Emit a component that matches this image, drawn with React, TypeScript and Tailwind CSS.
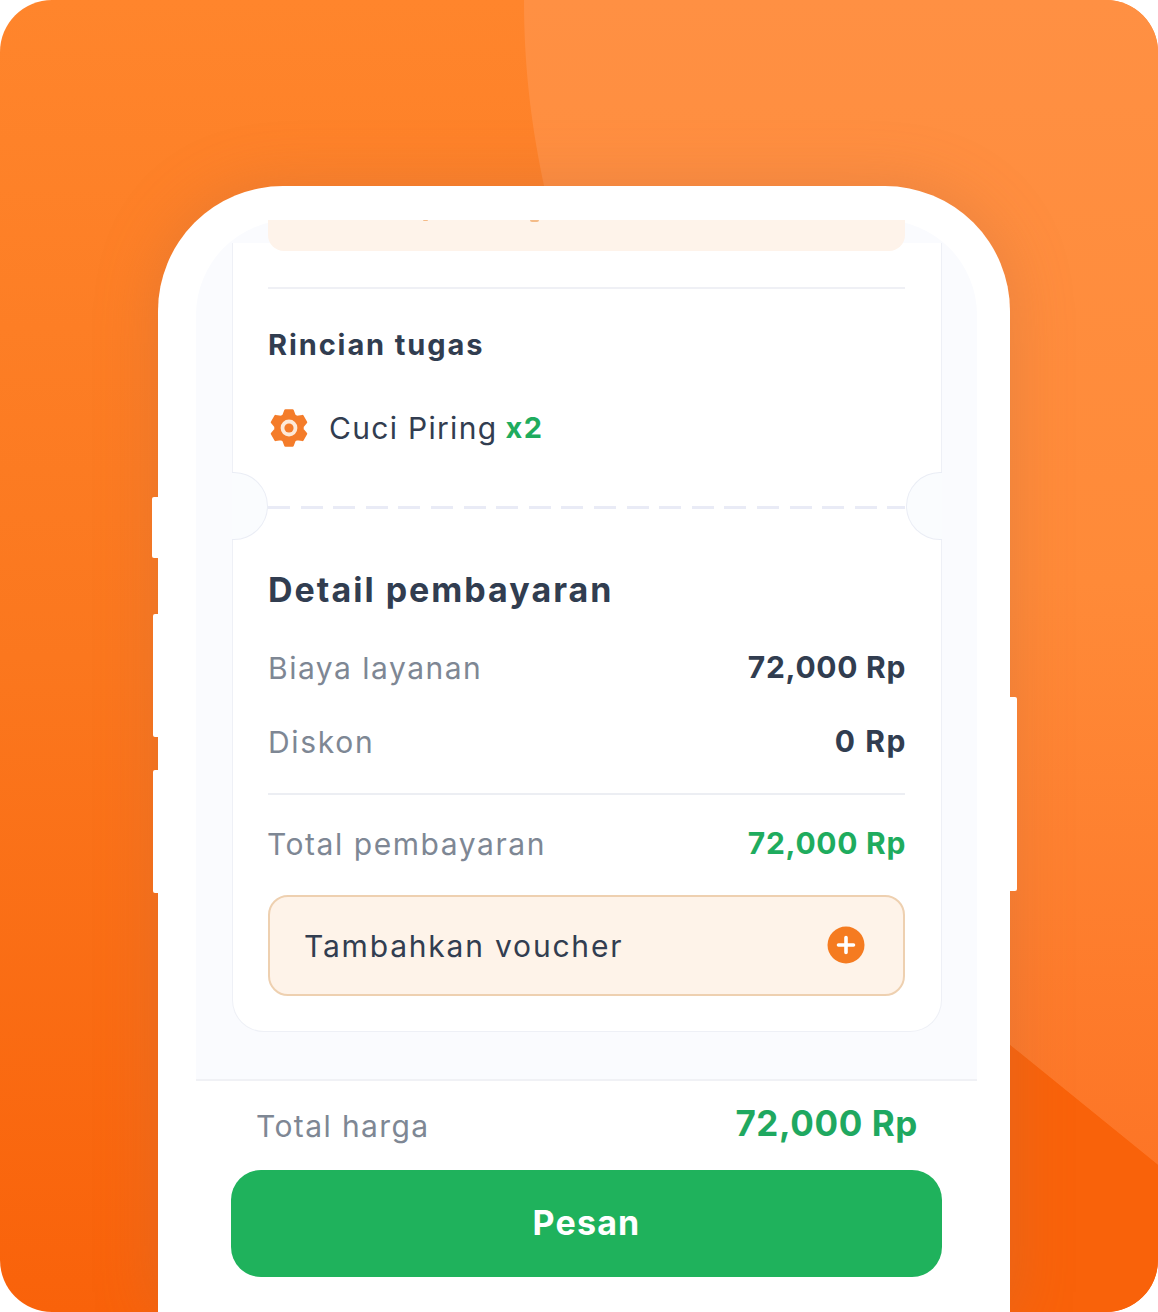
const gearPath = (() => {
  const pts: string[] = [];
  const cx = 20, cy = 20, outer = 18, inner = 13.6;
  for (let i = 0; i < 6; i++) {
    const a = (-90 + i * 60) * (Math.PI / 180);
    const steps: [number, number][] = [
      [inner, -0.42],
      [outer, -0.2],
      [outer, 0.2],
      [inner, 0.42],
    ];
    for (const [r, d] of steps) {
      pts.push(`${(cx + r * Math.cos(a + d)).toFixed(2)} ${(cy + r * Math.sin(a + d)).toFixed(2)}`);
    }
  }
  return "M" + pts.join("L") + "Z";
})();

function Gear() {
  return (
    <svg width="40" height="40" viewBox="0 0 40 40" className="shrink-0">
      <path d={gearPath} fill="#f47c2a" stroke="#f47c2a" strokeWidth="2.4" strokeLinejoin="round" />
      <circle cx="20" cy="20" r="8.4" fill="#fde9d8" />
      <circle cx="20" cy="20" r="4.6" fill="#f47c2a" />
    </svg>
  );
}

function PlusBadge() {
  return (
    <svg width="38" height="38" viewBox="0 0 38 38" className="shrink-0 -mt-[2px]">
      <circle cx="19" cy="19" r="18.5" fill="#f57b20" />
      <path d="M19 11.5v15M11.5 19h15" stroke="#fff" strokeWidth="3.6" strokeLinecap="round" />
    </svg>
  );
}

export default function App() {
  return (
    <div className="relative w-[1158px] h-[1312px] overflow-hidden rounded-[52px] pt-[186px] pl-[158px] bg-[linear-gradient(180deg,#ff852c_0%,#fb771e_50%,#f9620a_100%)] font-['Inter','Liberation_Sans',sans-serif]">
      <svg className="absolute inset-0" width="1158" height="1312" viewBox="0 0 1158 1312">
        <defs>
          <linearGradient id="light" x1="0" y1="0" x2="0" y2="1">
            <stop offset="0" stopColor="#ff9043" />
            <stop offset="0.5" stopColor="#ff8a38" />
            <stop offset="1" stopColor="#fd7526" />
          </linearGradient>
        </defs>
        <path d="M524 0C524 70 532 130 545 190L700 800L1010 1045L1158 1165V0Z" fill="url(#light)" />
        <path d="M1158 1165L1010 1045V1312H1158Z" fill="#f9620a" />
      </svg>

      {/* phone */}
      <div className="relative z-10 w-[852px] h-[1126px] rounded-t-[125px] bg-white pt-[34px] pl-[38px] pr-[33px] flex flex-col shadow-[0_0_60px_rgba(190,110,70,0.35)]">
        <div className="absolute left-[-6px] top-[311px] w-[7px] h-[61px] bg-white rounded-l-[2px]" />
        <div className="absolute left-[-5px] top-[428px] w-[6px] h-[123px] bg-white rounded-l-[2px]" />
        <div className="absolute left-[-5px] top-[584px] w-[6px] h-[123px] bg-white rounded-l-[2px]" />
        <div className="absolute right-[-7px] top-[511px] w-[8px] h-[194px] bg-white rounded-r-[2px]" />

        {/* screen */}
        <div className="flex-1 rounded-t-[95px] bg-[#fafbfe] pt-[23px] flex flex-col">
          {/* ticket */}
          <div className="mx-[36px] w-[710px] h-[789px] relative bg-white border-x border-b border-[#eef0f6] rounded-b-[32px] pl-[35px] pr-[36px]">
            <div className="relative -mt-[23px] h-[31px] rounded-b-[16px] bg-[#fef3ea]">
              <span className="absolute left-[155px] top-0 w-[5px] h-[1px] rounded-b-full bg-[#f4bb88]" />
              <span className="absolute left-[262px] top-0 w-[9px] h-[2px] rounded-b-full bg-[#f4bb88]" />
            </div>
            <div className="mt-[36px] h-[2px] bg-[#eff0f5]" />
            <div className="mt-[36px] h-[40px] leading-[40px] text-[29px] font-bold text-[#313d50] tracking-[1.9px]">Rincian tugas</div>
            <div className="mt-[43px] h-[40px] flex items-center">
              <span className="ml-[1px] flex"><Gear /></span>
              <span className="ml-[20px] text-[30px] leading-[40px] text-[#323d50] tracking-[1.3px]">Cuci Piring</span>
              <span className="ml-[8px] text-[29px] leading-[40px] font-bold text-[#1fac5e] tracking-[1.5px]">x2</span>
            </div>

            <div className="absolute left-[-1px] top-[229px] w-[36px] h-[68px] rounded-r-full bg-[#fafcfe] border border-l-0 border-[#eaedf5]" />
            <div className="absolute right-[-1px] top-[229px] w-[36px] h-[68px] rounded-l-full bg-[#fafcfe] border border-r-0 border-[#eaedf5]" />

            <div className="mt-[58px] h-[3px] bg-[repeating-linear-gradient(90deg,#e9ebf6_0_22px,transparent_22px_32.6px)]" />

            <div className="mt-[59px] h-[44px] leading-[44px] text-[34px] font-bold text-[#313d50] tracking-[2px]">Detail pembayaran</div>

            <div className="mt-[36px] h-[40px] flex items-center justify-between">
              <span className="text-[30px] text-[#7e8794] tracking-[1.5px]">Biaya layanan</span>
              <span className="-mr-[1px] pb-[2px] text-[30px] font-bold text-[#313d50] tracking-[0.7px]">72,000 Rp</span>
            </div>
            <div className="mt-[34px] h-[40px] flex items-center justify-between">
              <span className="text-[30px] text-[#7e8794] tracking-[1.7px]">Diskon</span>
              <span className="-mr-[2px] pb-[2px] text-[30px] font-bold text-[#313d50] tracking-[1.6px]">0 Rp</span>
            </div>
            <div className="mt-[31px] h-[2px] bg-[#eceef3]" />
            <div className="mt-[29px] h-[40px] flex items-center justify-between">
              <span className="-ml-[1px] text-[30px] text-[#7e8794] tracking-[1.55px]">Total pembayaran</span>
              <span className="-mr-[1px] pb-[2px] text-[30px] font-bold text-[#1fac5e] tracking-[0.7px]">72,000 Rp</span>
            </div>

            <div className="mt-[31px] h-[101px] rounded-[20px] bg-[#fef3e9] border-2 border-[#eed0b0] pl-[34px] pr-[38px] flex items-center justify-between">
              <span className="pt-[2px] text-[30px] text-[#323d50] tracking-[1.8px]">Tambahkan voucher</span>
              <PlusBadge />
            </div>
          </div>

          {/* bottom bar */}
          <div className="mt-[47px] flex-1 bg-white border-t-2 border-[#f0f1f5] px-[35px]">
            <div className="mt-[24px] h-[40px] px-[26px] flex items-center justify-between">
              <span className="pt-[2px] text-[30px] text-[#7e8794] tracking-[1.4px] -ml-[1px]">Total harga</span>
              <span className="-mr-[2px] pb-[4px] text-[35px] font-bold text-[#1fa860] tracking-[0.6px]">72,000 Rp</span>
            </div>
            <div className="mt-[25px] h-[107px] rounded-[30px] bg-[#1fb25c] pb-[3px] flex items-center justify-center text-[34px] font-bold text-white tracking-[1.2px]">Pesan</div>
          </div>
        </div>
      </div>
    </div>
  );
}
